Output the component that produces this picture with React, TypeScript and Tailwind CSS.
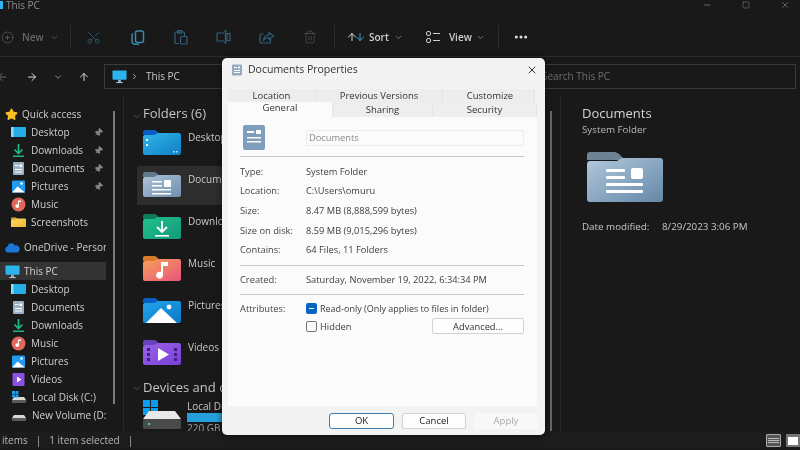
import type { ReactNode } from "react";
import { ArrowLeft, ArrowRight, ArrowUp, ChevronDown, ChevronRight, Minus, MoreHorizontal, Pin, PlusCircle, Scissors, Square, Star, Trash2, X } from "lucide-react";

function Folder({ tab, from, to, w = 38, children }: { tab: string; from: string; to: string; w?: number; children?: ReactNode }) {
  const id = `f${from.slice(1)}${w}`;
  return (
    <svg width={w} height={(w * 26) / 38} viewBox="0 0 38 26" className="shrink-0">
      <defs>
        <linearGradient id={id} x1="0" y1="0" x2="1" y2="1">
          <stop offset="0" stopColor={from} />
          <stop offset="1" stopColor={to} />
        </linearGradient>
      </defs>
      <path d="M0 3a2 2 0 0 1 2-2h9c2 0 3 1 4 2.5l2 2.5H0z" fill={tab} />
      <path d="M0 8c0-1 1-2 2-2h9l4-2h21a2 2 0 0 1 2 2v18a2 2 0 0 1-2 2H2a2 2 0 0 1-2-2z" fill={`url(#${id})`} />
      {children}
    </svg>
  );
}

const DocLines = () => (
  <g fill="#fff">
    <rect x="9" y="10" width="10" height="1.5" />
    <rect x="9" y="14" width="10" height="1.5" />
    <rect x="21" y="9" width="7" height="7" rx="1" />
    <rect x="9" y="18" width="19" height="1.5" />
    <rect x="9" y="22" width="19" height="1.5" />
  </g>
);

const folders: { name: string; selected?: boolean; icon: ReactNode }[] = [
  {
    name: "Desktop",
    icon: (
      <Folder tab="#0b5cc0" from="#2fb6ea" to="#0f7fc4">
        <rect x="3" y="10" width="2" height="2" fill="#fff" />
        <rect x="3" y="15" width="2" height="2" fill="#fff" />
        <rect x="30" y="22" width="1.5" height="1.5" fill="#cdeefa" />
        <rect x="33" y="22" width="1.5" height="1.5" fill="#cdeefa" />
      </Folder>
    ),
  },
  {
    name: "Documents",
    selected: true,
    icon: (
      <Folder tab="#5f7a8c" from="#b0c4d8" to="#6d8fae">
        <DocLines />
      </Folder>
    ),
  },
  {
    name: "Downloads",
    icon: (
      <Folder tab="#0c7a5c" from="#23c08e" to="#129a78">
        <path d="M19 8v11M14 14l5 5 5-5" stroke="#fff" strokeWidth="1.8" fill="none" />
        <rect x="12" y="22" width="14" height="1.6" fill="#fff" />
      </Folder>
    ),
  },
  {
    name: "Music",
    icon: (
      <Folder tab="#d97a2c" from="#f5a05a" to="#e8557a">
        <path d="M20 7v13a3.5 3.5 0 1 1-2-3V7h7v4h-5z" fill="#fff" />
      </Folder>
    ),
  },
  {
    name: "Pictures",
    icon: (
      <Folder tab="#0b5cc0" from="#22a5ea" to="#0c78c8">
        <circle cx="26" cy="10" r="2.4" fill="#fff" />
        <path d="M3 26 18 11l16 15z" fill="#fff" />
      </Folder>
    ),
  },
  {
    name: "Videos",
    icon: (
      <Folder tab="#6a3fc0" from="#9a63e8" to="#7a3ed8">
        <path d="M15 9v13l11-6.500z" fill="#fff" />
        <path d="M4 9h3v3H4zM4 14h3v3H4zM4 19h3v3H4zM31 9h3v3h-3zM31 14h3v3h-3zM31 19h3v3h-3z" fill="#3c1f80" />
      </Folder>
    ),
  },
];

function MonitorIcon({ w = 15 }: { w?: number }) {
  return (
    <svg width={w} height={w} viewBox="0 0 16 16" className="shrink-0">
      <rect x="0.500" y="1.500" width="15" height="10" rx="1" fill="#2cb4ec" />
      <rect x="6.500" y="11.500" width="3" height="2.500" fill="#8fb4c8" />
      <rect x="4.500" y="14" width="7" height="1" fill="#c8d4dc" />
    </svg>
  );
}

function DiskIcon({ win }: { win?: boolean }) {
  return (
    <svg width="16" height="16" viewBox="0 0 16 16" className="shrink-0">
      <path d="M3 8h10l2 3v2H1v-2z" fill="#d8d8d8" />
      <rect x="1" y="11" width="14" height="3" rx="0.500" fill="#5a5a5a" />
      {win && <path d="M1 2h3v3H1zM4.500 2h3v3h-3zM1 5.500h3v3H1zM4.500 5.500h3v3h-3z" fill="#1a9fe8" />}
    </svg>
  );
}

const I = {
  desktop: (
    <svg width="15" height="15" viewBox="0 0 15 15" className="shrink-0">
      <rect x="0" y="2" width="15" height="10" rx="1" fill="#25aee6" />
      <rect x="0" y="2" width="2.500" height="10" fill="#8fdcf5" />
    </svg>
  ),
  downloads: (
    <svg width="15" height="15" viewBox="0 0 15 15" className="shrink-0">
      <path d="M7.500 1v9M3.500 6.500l4 4 4-4" stroke="#1fb48a" strokeWidth="1.700" fill="none" />
      <rect x="2" y="12.500" width="11" height="1.500" fill="#1fb48a" />
    </svg>
  ),
  documents: (
    <svg width="15" height="15" viewBox="0 0 15 15" className="shrink-0">
      <rect x="2" y="1" width="11" height="13" rx="1" fill="#9cb0c6" />
      <rect x="4" y="4" width="3.500" height="1" fill="#fff" />
      <rect x="8.500" y="3.500" width="2.500" height="2.500" fill="#fff" />
      <rect x="4" y="8" width="7" height="1" fill="#fff" />
      <rect x="4" y="10.500" width="7" height="1" fill="#fff" />
    </svg>
  ),
  pictures: (
    <svg width="15" height="15" viewBox="0 0 15 15" className="shrink-0">
      <rect x="1" y="1.500" width="13" height="12" rx="1" fill="#1f9cf0" />
      <circle cx="10.500" cy="4.500" r="1.300" fill="#fff" />
      <path d="M1 13.500 6.500 7.500 14 13.500z" fill="#fff" />
    </svg>
  ),
  music: (
    <svg width="15" height="15" viewBox="0 0 15 15" className="shrink-0">
      <circle cx="7.500" cy="7.500" r="7" fill="#e2685c" />
      <path d="M8 3.500v5.500a1.800 1.800 0 1 1-1-1.500V3.500h3v1.500H8z" fill="#fff" />
    </svg>
  ),
  screenshots: <Folder w={15} tab="#e8a820" from="#fcd860" to="#f0b830" />,
  videos: (
    <svg width="15" height="15" viewBox="0 0 15 15" className="shrink-0">
      <rect x="1.500" y="1" width="12" height="13" rx="1" fill="#8a50e0" />
      <path d="M6 4.500v6l4.500-3z" fill="#fff" />
    </svg>
  ),
  cloud: (
    <svg width="15" height="15" viewBox="0 0 15 10" className="shrink-0">
      <path d="M3 10a3 3 0 0 1-.5-5.900A4 4 0 0 1 10 3a3.500 3.500 0 0 1 2 7z" fill="#1a78d8" />
    </svg>
  ),
};

const NavRow = ({ icon, label, pin, selected, indent = true }: { icon: ReactNode; label: string; pin?: boolean; selected?: boolean; indent?: boolean }) => (
  <div className={`flex h-[18px] items-center ${indent ? "pl-[11px] gap-[5px]" : "pl-[5px] gap-[4px]"} ${selected ? "bg-[#333333]" : ""}`}>
    {icon}
    <span className="min-w-0 flex-1 overflow-hidden whitespace-nowrap text-[10px] text-[#cfcfcf]">{label}</span>
    {pin && <Pin size={9} className="mr-[3px] shrink-0 rotate-45 fill-[#8a8a8a] text-[#8a8a8a]" />}
  </div>
);

const ToolIcon = ({ children, x }: { children: ReactNode; x: string }) => <div className={`flex justify-center ${x}`}>{children}</div>;

const Info = ({ label, value }: { label: string; value: string }) => (
  <div className="flex h-[19.600px] items-center">
    <span className="w-[66px] text-[#444444]">{label}</span>
    <span className="text-[#3c3c3c]">{value}</span>
  </div>
);

const Tab = ({ label, className }: { label: string; className: string }) => (
  <div className={`flex items-center justify-center border-r border-[#e4e4e4] text-[9.500px] text-[#333333] ${className}`}>{label}</div>
);

export default function App() {
  return (
    <div className="relative flex h-[450px] w-[800px] flex-col overflow-hidden bg-[#191919] font-['Open_Sans','Noto_Sans',sans-serif] blur-[0.3px]">
      {/* title bar */}
      <div className="flex h-[10px] items-center justify-between">
        <div className="flex items-center gap-[3px]">
          <div className="h-[8px] w-[3px] bg-[#2cb4ec]" />
          <span className="text-[10px] text-[#8f8f8f]">This PC</span>
        </div>
        <div className="flex items-center gap-[30px] pr-[10px] text-[#707070]">
          <Minus size={10} />
          <Square size={8} />
          <X size={10} />
        </div>
      </div>

      {/* toolbar */}
      <div className="flex h-[47px] items-center border-b border-[#2c2c2c] pt-[8px]">
        <div className="flex w-[70px] items-center pl-[1px] text-[#686868]">
          <PlusCircle size={13} strokeWidth={1.2} />
          <span className="ml-[8px] text-[10px] font-semibold">New</span>
          <ChevronDown size={9} className="ml-[6px]" />
        </div>
        <div className="h-[24px] w-px bg-[#2c2c2c]" />
        <div className="flex items-center text-[#31607a]">
          <ToolIcon x="w-[45px]"><Scissors size={15} strokeWidth={1.3} className="-rotate-90" /></ToolIcon>
          <ToolIcon x="w-[43px]">
            <svg width="14" height="15" viewBox="0 0 14 15" fill="none" stroke="#3f87ad" strokeWidth="1.500">
              <rect x="4.500" y="1" width="8" height="11.500" rx="2" />
              <path d="M2 3.500C1.200 4.200 1 5 1 6v5c0 2 1.500 3.300 3.300 3.300H8" />
            </svg>
          </ToolIcon>
          <ToolIcon x="w-[43px]">
            <svg width="14" height="15" viewBox="0 0 14 15" fill="none" stroke="currentColor" strokeWidth="1.200">
              <path d="M5 13.500H2a1 1 0 0 1-1-1V3a1 1 0 0 1 1-1h7.500a1 1 0 0 1 1 1v3" />
              <rect x="3.500" y="0.700" width="4.500" height="2.500" rx="0.800" />
              <rect x="6.500" y="6.500" width="6.500" height="7.500" rx="1" />
            </svg>
          </ToolIcon>
          <ToolIcon x="w-[43px]">
            <svg width="15" height="14" viewBox="0 0 15 14" fill="none" stroke="currentColor" strokeWidth="1.200">
              <path d="M8 3H2a1 1 0 0 0-1 1v6a1 1 0 0 0 1 1h6" />
              <rect x="11" y="3.500" width="3" height="7" />
              <path d="M9.500 1v12M8 1h3M8 13h3" />
            </svg>
          </ToolIcon>
          <ToolIcon x="w-[43px]">
            <svg width="15" height="14" viewBox="0 0 15 14" fill="none" stroke="currentColor" strokeWidth="1.200">
              <path d="M11.500 9v3a1 1 0 0 1-1 1H2a1 1 0 0 1-1-1V5a1 1 0 0 1 1-1h2.500" />
              <path d="M4.500 10c.5-3 2.500-5 5.500-5V2.500L14.500 6 10 9.500V7.500c-2.500 0-4 1-5.500 2.500z" />
            </svg>
          </ToolIcon>
          <ToolIcon x="w-[43px]"><Trash2 size={14} strokeWidth={1.2} className="text-[#555555]" /></ToolIcon>
        </div>
        <div className="ml-[3px] h-[24px] w-px bg-[#2c2c2c]" />
        <div className="ml-[11px] flex items-center">
          <ArrowUp size={12} className="text-[#d8d8d8]" />
          <ArrowUp size={12} className="-ml-[4px] rotate-180 text-[#3d9fe0]" />
          <span className="ml-[3px] text-[10px] font-semibold text-[#d0d0d0]">Sort</span>
          <ChevronDown size={9} className="ml-[5px] text-[#909090]" />
        </div>
        <div className="ml-[23px] flex items-center">
          <svg width="15" height="13" viewBox="0 0 15 13" fill="none" stroke="#cfcfcf">
            <rect x="0.500" y="0.500" width="4" height="4" rx="1.500" />
            <rect x="0.500" y="7.500" width="4" height="4" rx="1.500" />
            <path d="M7 2.500h7M7 9.500h7" />
          </svg>
          <span className="ml-[8px] text-[10px] font-semibold text-[#d0d0d0]">View</span>
          <ChevronDown size={9} className="ml-[4px] text-[#909090]" />
        </div>
        <div className="ml-[13px] h-[24px] w-px bg-[#2c2c2c]" />
        <MoreHorizontal size={16} strokeWidth={2.5} className="ml-[14px] text-[#e0e0e0]" />
      </div>

      {/* address row */}
      <div className="flex h-[39px] pt-[7px] pb-[7px] pr-[4px]">
        <div className="flex w-[104px] items-center text-[#d8d8d8]">
          <ArrowLeft size={12} className="-ml-[4px] text-[#707070]" />
          <ArrowRight size={12} className="ml-[18px]" />
          <ChevronDown size={10} className="ml-[15px] text-[#a0a0a0]" />
          <ArrowUp size={12} className="ml-[15px]" />
        </div>
        <div className="flex w-[425px] items-center border border-[#3a3a3a] pl-[7px]">
          <MonitorIcon />
          <ChevronRight size={9} className="ml-[3px] text-[#d0d0d0]" />
          <span className="ml-[7px] text-[10px] text-[#c8c8c8]">This PC</span>
        </div>
        <div className="ml-[6px] flex flex-1 items-center border border-[#3a3a3a] pl-[6px]">
          <span className="text-[10px] text-[#6e6e6e]">Search This PC</span>
        </div>
      </div>

      {/* body */}
      <div className="flex h-[335px]">
        <div className="flex w-[124px] shrink-0 border-r border-[#2a2a2a]">
          <div className="w-[106px] shrink-0 pt-[9px]">
            <NavRow indent={false} icon={<Star size={13} className="fill-[#f8c020] text-[#f8c020]" />} label="Quick access" />
            <NavRow icon={I.desktop} label="Desktop" pin />
            <NavRow icon={I.downloads} label="Downloads" pin />
            <NavRow icon={I.documents} label="Documents" pin />
            <NavRow icon={I.pictures} label="Pictures" pin />
            <NavRow icon={I.music} label="Music" />
            <NavRow icon={I.screenshots} label="Screenshots" />
            <div className="mt-[7px]">
              <NavRow indent={false} icon={I.cloud} label="OneDrive - Personal" />
            </div>
            <div className="mt-[6px]">
              <NavRow indent={false} selected icon={<MonitorIcon />} label="This PC" />
            </div>
            <NavRow icon={I.desktop} label="Desktop" />
            <NavRow icon={I.documents} label="Documents" />
            <NavRow icon={I.downloads} label="Downloads" />
            <NavRow icon={I.music} label="Music" />
            <NavRow icon={I.pictures} label="Pictures" />
            <NavRow icon={I.videos} label="Videos" />
            <NavRow icon={<DiskIcon win />} label="Local Disk (C:)" />
            <NavRow icon={<DiskIcon />} label="New Volume (D:)" />
          </div>
          <div className="ml-[7px] mt-[15px] h-[293px] w-[2px] bg-[#7c7c7c]" />
        </div>

        <div className="min-w-0 flex-1 overflow-hidden pl-[13px]">
          <div className="-ml-[6px] flex h-[28px] items-end pb-[2px]">
            <ChevronDown size={11} className="text-[#555555]" />
            <span className="ml-[1px] whitespace-nowrap text-[13px] leading-[18px] text-[#c4c4c4]">Folders (6)</span>
          </div>
          <div className="flex flex-col gap-[3px]">
            {folders.map((f) => (
              <div key={f.name} className={`flex h-[39px] items-start pl-[6px] pt-[5px] ${f.selected ? "bg-[#2d2d2d]" : ""}`}>
                {f.icon}
                <span className="ml-[7px] mt-[1px] text-[10px] text-[#c8c8c8]">{f.name}</span>
              </div>
            ))}
          </div>
          <div className="-ml-[6px] mt-[5px] flex h-[20px] items-center">
            <ChevronDown size={11} className="text-[#555555]" />
            <span className="ml-[1px] whitespace-nowrap text-[13px] text-[#c4c4c4]">Devices and drives</span>
          </div>
          <div className="mt-[2px] flex items-start pl-[6px]">
            <svg width="38" height="30" viewBox="0 0 38 30" className="shrink-0">
              <path d="M0 0h7v7H0zM8 0h7v7H8zM0 8h7v7H0zM8 8h7v7H8z" fill="#0e9cf0" />
              <path d="M6 11h26l6 8H0z" fill="#e8e8e8" />
              <rect x="0" y="19" width="38" height="10" rx="1.500" fill="#4a4a4a" />
              <circle cx="6" cy="24" r="1.300" fill="#34d858" />
            </svg>
            <div className="ml-[6px] flex w-[120px] flex-col">
              <span className="text-[10px] leading-[12px] text-[#c8c8c8]">Local Disk (C:)</span>
              <div className="mt-[1px] h-[9px] bg-[#3a3a3a]">
                <div className="h-full w-[70%] bg-[#26a0da]" />
              </div>
              <span className="text-[10px] leading-[13px] text-[#a0a0a0]">220 GB free</span>
            </div>
          </div>
        </div>

        <div className="mx-[8px] mt-[15px] h-[320px] w-[2px] bg-[#666666]" />
        <div className="w-[240px] shrink-0 border-l border-[#2a2a2a] pl-[21px] pt-[8px]">
          <div className="text-[13px] leading-[18px] text-[#d4d4d4]">Documents</div>
          <div className="mt-[1px] text-[9.800px] font-medium leading-[14px] text-[#b8b8b8]">System Folder</div>
          <div className="ml-[5px] mt-[13px]">
            <svg width="76" height="52" viewBox="0 0 76 52" className="block">
              <defs>
                <linearGradient id="big" x1="0" y1="0" x2="1" y2="1">
                  <stop offset="0" stopColor="#b2c8dc" />
                  <stop offset="1" stopColor="#6488a8" />
                </linearGradient>
              </defs>
              <path d="M0 5a3 3 0 0 1 3-3h24c3 0 5 2 6 3l5 5H0z" fill="#6e8494" />
              <path d="M0 14c0-2 1-3 3-3h27l5-3h38a3 3 0 0 1 3 3v38a3 3 0 0 1-3 3H3a3 3 0 0 1-3-3z" fill="url(#big)" />
              <g fill="#fff">
                <rect x="19" y="19" width="19" height="3" rx="1" />
                <rect x="19" y="26" width="19" height="3" rx="1" />
                <rect x="44" y="18" width="12" height="11" rx="2" />
                <rect x="19" y="33" width="37" height="3" rx="1" />
                <rect x="19" y="40" width="37" height="3" rx="1" />
              </g>
            </svg>
          </div>
          <div className="mt-[18px] flex text-[9.800px] font-medium text-[#c8c8c8]">
            <span className="w-[80px]">Date modified:</span>
            <span>8/29/2023 3:06 PM</span>
          </div>
        </div>
      </div>

      {/* status bar */}
      <div className="relative flex h-[18px] items-center overflow-hidden bg-[#1c1c1c] pl-[2px] pt-[1px] text-[10px] text-[#b8b8b8]">
        <span>items</span>
        <span className="ml-[8px]">|</span>
        <span className="ml-[8px]">1 item selected</span>
        <span className="ml-[8px]">|</span>
        <div className="ml-auto flex items-center gap-[5px]">
          <div className="flex h-[13px] w-[15px] flex-col justify-center gap-[1px] rounded-[1px] border border-[#aaaaaa] bg-[#555555] px-[1px]">
            <div className="h-px bg-[#bbbbbb]" />
            <div className="h-px bg-[#bbbbbb]" />
            <div className="h-px bg-[#bbbbbb]" />
          </div>
          <div className="flex h-[13px] w-[14px] items-center rounded-[1px] bg-[#777777] pl-[2px]">
            <div className="h-[8px] w-[10px] bg-white" />
          </div>
        </div>
      </div>

      {/* properties dialog */}
      <div className="absolute left-[222px] top-[58px] flex h-[377px] w-[323px] flex-col rounded-[5px] bg-[#f3f3f3] shadow-[0_0_6px_rgba(0,0,0,0.6)]">
        <div className="flex h-[23px] items-center pl-[9px] pr-[7px] pt-[1px]">
          <svg width="12" height="12" viewBox="0 0 12 12">
            <rect x="1" y="0.500" width="10" height="11" rx="1" fill="#93aac2" />
            <rect x="3" y="3" width="3" height="1" fill="#fff" />
            <rect x="7" y="2.500" width="2" height="2" fill="#fff" />
            <rect x="3" y="6" width="6" height="1" fill="#fff" />
            <rect x="3" y="8" width="6" height="1" fill="#fff" />
          </svg>
          <span className="ml-[5px] text-[10.500px] text-[#333333]">Documents Properties</span>
          <X size={12} className="ml-auto text-[#333333]" />
        </div>
        <div className="mt-[8px] flex h-[14px] pl-[6px]">
          <Tab label="Location" className="w-[88px] bg-[#ededed]" />
          <Tab label="Previous Versions" className="w-[127px] bg-[#ededed]" />
          <Tab label="Customize" className="w-[92px] pl-[3px] bg-[#ededed]" />
        </div>
        <div className="flex h-[14px] pl-[6px]">
          <Tab label="General" className="-mt-[1px] h-[15px] w-[105px] bg-[#fbfbfb] pb-[3px]" />
          <Tab label="Sharing" className="w-[100px] bg-[#eeeeee]" />
          <Tab label="Security" className="w-[104px] bg-[#eeeeee]" />
        </div>
        <div className="ml-[6px] mr-[8px] flex h-[289px] flex-col bg-[#fbfbfb] pl-[12px] pr-[13px] text-[9.300px]">
          <div className="flex h-[40px] items-center border-b border-[#c8c8c8] pt-[2px]">
            <svg width="22" height="25" viewBox="0 0 22 25" className="ml-[3px] shrink-0">
              <rect x="0" y="0" width="22" height="25" rx="2" fill="#7e9ebc" />
              <rect x="4" y="6" width="7" height="2" fill="#fff" />
              <rect x="13" y="5" width="5" height="4" fill="#fff" />
              <rect x="4" y="12" width="14" height="1.500" fill="#fff" />
              <rect x="4" y="16" width="14" height="1.500" fill="#fff" />
            </svg>
            <div className="ml-[41px] flex h-[16px] w-[219px] items-center border border-[#ececec] pl-[2px] text-[#8a8a8a]">Documents</div>
          </div>
          <div className="flex flex-col border-b border-[#c8c8c8] pb-[5px] pt-[5px]">
            <Info label="Type:" value="System Folder" />
            <Info label="Location:" value="C:\Users\omuru" />
            <Info label="Size:" value="8.47 MB (8,888,599 bytes)" />
            <Info label="Size on disk:" value="8.59 MB (9,015,296 bytes)" />
            <Info label="Contains:" value="64 Files, 11 Folders" />
          </div>
          <div className="flex h-[29px] items-center border-b border-[#c8c8c8] text-[#3c3c3c]">
            <span className="w-[66px] text-[#444444]">Created:</span>
            <span>Saturday, November 19, 2022, 6:34:34 PM</span>
          </div>
          <div className="mt-[7px] flex">
            <span className="w-[66px] text-[#444444]">Attributes:</span>
            <div className="flex flex-1 flex-col">
              <div className="flex items-center gap-[3px] text-[9px] text-[#3c3c3c]">
                <div className="flex h-[11px] w-[11px] items-center justify-center rounded-[2px] bg-[#0a64c2]">
                  <div className="h-px w-[5px] bg-white" />
                </div>
                Read-only (Only applies to files in folder)
              </div>
              <div className="mt-[3px] flex items-center gap-[3px] text-[#3c3c3c]">
                <div className="h-[11px] w-[11px] rounded-[2px] border border-[#777777]" />
                Hidden
                <button className="ml-auto flex h-[16px] w-[92px] items-center justify-center rounded-[2px] border border-[#d2d2d2] bg-[#fdfdfd] text-[#333333]">Advanced...</button>
              </div>
            </div>
          </div>
        </div>
        <div className="mt-[7px] flex justify-end gap-[8px] pr-[7px] text-[9.500px]">
          <button className="flex h-[16px] w-[65px] items-center justify-center rounded-[3px] border border-[#3a7fb0] bg-[#fdfdfd] text-[#222222]">OK</button>
          <button className="flex h-[16px] w-[64px] items-center justify-center rounded-[2px] border border-[#d2d2d2] bg-[#fdfdfd] text-[#222222]">Cancel</button>
          <button className="flex h-[16px] w-[64px] items-center justify-center rounded-[2px] bg-[#f8f8f8] text-[#a8a8a8]">Apply</button>
        </div>
      </div>
    </div>
  );
}
